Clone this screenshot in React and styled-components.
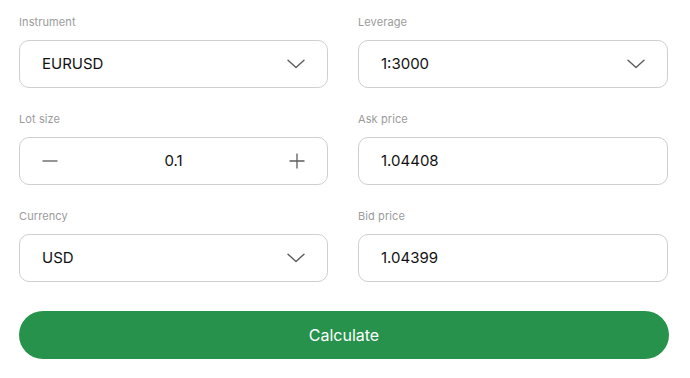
import React from "react";
import styled, { createGlobalStyle } from "styled-components";

const Global = createGlobalStyle`
  html, body { margin: 0; padding: 0; background: #fff; }
  body { font-family: "Inter", "Noto Sans", sans-serif; }
  * { box-sizing: border-box; }
`;

const Page = styled.div`
  width: 690px;
  padding: 14px 21px 0 19px;
`;

const Grid = styled.div`
  display: grid;
  grid-template-columns: 309px 310px;
  column-gap: 30px;
  row-gap: 23px;
`;

const Field = styled.div`
  display: flex;
  flex-direction: column;
  gap: 10px;
`;

const Label = styled.div`
  font-size: 11px;
  line-height: 16px;
  color: #9b9b9b;
  letter-spacing: 0.1px;
`;

const Box = styled.div`
  height: 48px;
  border: 1px solid #cfcfcf;
  border-radius: 10px;
  display: flex;
  align-items: center;
  justify-content: ${(p) => (p.$center ? "space-between" : "flex-start")};
  padding: 0 22px;
  font-size: 15px;
  color: #111;
  background: #fff;
`;

const Value = styled.span`
  flex: ${(p) => (p.$grow ? 1 : "none")};
  text-align: ${(p) => (p.$center ? "center" : "left")};
  margin-top: -2px;
`;

const IconWrap = styled.span`
  display: flex;
  align-items: center;
  color: #5c5c5c;
`;

const Button = styled.button`
  margin-top: 29px;
  width: 650px;
  height: 48px;
  border: none;
  border-radius: 24px;
  background: #26924c;
  color: #fff;
  font-family: inherit;
  font-size: 16px;
  display: flex;
  align-items: center;
  justify-content: center;
`;

const Chevron = () => (
  <IconWrap>
    <svg width="18" height="10" viewBox="0 0 18 10" fill="none">
      <path d="M1 1.2 L9 8.6 L17 1.2" stroke="currentColor" strokeWidth="1.4" strokeLinecap="round" strokeLinejoin="round" />
    </svg>
  </IconWrap>
);

const Minus = () => (
  <IconWrap>
    <svg width="16" height="16" viewBox="0 0 16 16" fill="none">
      <path d="M0.5 8 H15.5" stroke="currentColor" strokeWidth="1.3" />
    </svg>
  </IconWrap>
);

const Plus = () => (
  <IconWrap>
    <svg width="16" height="16" viewBox="0 0 16 16" fill="none">
      <path d="M0.5 8 H15.5 M8 0.5 V15.5" stroke="currentColor" strokeWidth="1.3" />
    </svg>
  </IconWrap>
);

const Select = ({ label, value }) => (
  <Field>
    <Label>{label}</Label>
    <Box>
      <Value $grow>{value}</Value>
      <Chevron />
    </Box>
  </Field>
);

const Input = ({ label, value }) => (
  <Field>
    <Label>{label}</Label>
    <Box>
      <Value>{value}</Value>
    </Box>
  </Field>
);

export default function App() {
  return (
    <>
      <Global />
      <Page>
        <Grid>
          <Select label="Instrument" value="EURUSD" />
          <Select label="Leverage" value="1:3000" />
          <Field>
            <Label>Lot size</Label>
            <Box $center>
              <Minus />
              <Value $grow $center>0.1</Value>
              <Plus />
            </Box>
          </Field>
          <Input label="Ask price" value="1.04408" />
          <Select label="Currency" value="USD" />
          <Input label="Bid price" value="1.04399" />
        </Grid>
        <Button>Calculate</Button>
      </Page>
    </>
  );
}
